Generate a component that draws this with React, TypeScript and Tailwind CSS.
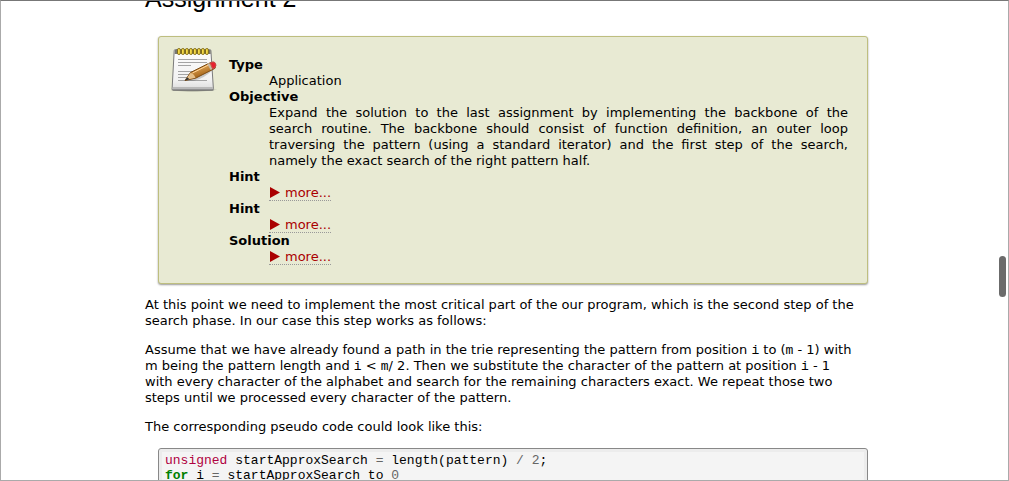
import type { ReactNode } from 'react';

function NotepadIcon() {
  return (
    <svg className="h-12 w-12" viewBox="0 0 48 48" aria-hidden="true">
      <defs>
        <linearGradient id="paper" x1="0" y1="0" x2="0" y2="1">
          <stop offset="0" stopColor="#fdfdfd" />
          <stop offset="0.75" stopColor="#f2f2f2" />
          <stop offset="1" stopColor="#dcdcdc" />
        </linearGradient>
        <linearGradient id="wood" x1="0" y1="0" x2="0.5" y2="1">
          <stop offset="0.25" stopColor="#eeb465" />
          <stop offset="0.8" stopColor="#a8681c" />
        </linearGradient>
        <radialGradient id="shade">
          <stop offset="0.6" stopColor="#000" stopOpacity="0.3" />
          <stop offset="1" stopColor="#000" stopOpacity="0" />
        </radialGradient>
      </defs>
      <ellipse cx="21.500" cy="44.500" rx="25" ry="2.500" fill="url(#shade)" />
      <path d="M4.500 4.500h34q1.300 0 1.400 1.200l2.500 38q0 1.300-1.400 1.300h-38.500q-1.400 0-1.400-1.300l2.100-38q.1-1.200 1.300-1.200z" fill="url(#paper)" stroke="#7b7b7b" />
      <path d="M1.800 42h40l.2 2.500h-40.500z" fill="#b9b9b9" />
      <path d="M1.500 45h41" stroke="#6a6a6a" />
      <path d="M4 5h35.500l.2 4h-36z" fill="#77776f" />
      <path d="M7 14.500h29M7 17.500h29M7 20.500h13M7 26.500h22M7 29.500h19M7 32.500h10M7 35.500h29" stroke="#a4a4a4" />
      {[6, 10, 14, 18, 22, 26, 30, 34].map((x) => (
        <rect key={x} x={x + 0.5} y="3.500" width="2.800" height="6" rx="1.300" fill="#f5da48" stroke="#715c08" strokeWidth="0.8" />
      ))}
      <path d="M15 36q12 1 22-7l6-5-8 0z" fill="#444" opacity="0.25" />
      <path d="M14 35.500l5.500-8 18-9q3.500-1.700 5.500-1.200 3 2.200 1 6L25 33z" fill="url(#wood)" stroke="#7d4b12" strokeLinejoin="round" />
      <path d="M14.500 35l5-7q3.500.5 5 4.800z" fill="#e5c08a" />
      <path d="M14 35.500l2.200-3.200 2.300 1.900z" fill="#333" />
      <path d="M21.500 28l16-8" stroke="#ffd292" />
      <path d="M37.200 18.600l3.300 6" stroke="#c7b9a9" strokeWidth="2" />
      <path d="M39.300 17.800q3.200-1.500 4.500-.3 2.200 2.500.2 5l-2.200 1.500z" fill="#e8212e" stroke="#c84a4a" />
    </svg>
  );
}

function More() {
  return (
    <a href="#more" className="flex h-4 items-center gap-1 border-b border-dotted border-[#999] text-[#aa0000]">
      <svg className="h-3 w-3" viewBox="0 0 12 12" aria-hidden="true">
        <path d="M1 0L11 5.500L1 11z" fill="#aa0000" />
      </svg>
      more...
    </a>
  );
}

function Entry({ term, children }: { term: string; children: ReactNode }) {
  return (
    <>
      <dt className="font-bold">{term}</dt>
      <dd className="flex pl-10">{children}</dd>
    </>
  );
}

function Mono({ children }: { children: ReactNode }) {
  return <code className="font-['Liberation_Mono',monospace] text-[13px] leading-none">{children}</code>;
}

export default function App() {
  return (
    <div className="relative h-screen overflow-hidden border border-[#aaa] border-t-[#777] bg-white font-['DejaVu_Sans',sans-serif] text-[13px] leading-4 text-black">
      <main className="-mt-[19px] mr-32 ml-36">
        <h2 className="font-['Liberation_Sans',sans-serif] text-[25px] leading-8 font-medium">Assignment 2</h2>
        <section className="mt-[22px] mr-3 ml-[13px] flex gap-2.5 rounded-[3px] border border-[#bebe7f] bg-[#e8ead3] px-3 pt-2 pb-[18px] shadow-[0_1px_2px_#999]">
          <div className="shrink-0">
            <NotepadIcon />
          </div>
          <dl className="mr-[7px] flex-1 pt-3">
            <Entry term="Type">Application</Entry>
            <Entry term="Objective">
              <p className="flex-1">
                <span className="block [text-align-last:justify]">Expand the solution to the last assignment by implementing the backbone of the </span>
                <span className="block [text-align-last:justify]">search routine. The backbone should consist of function definition, an outer loop </span>
                <span className="block [text-align-last:justify]">traversing the pattern (using a standard iterator) and the first step of the search, </span>
                <span className="block">namely the exact search of the right pattern half.</span>
              </p>
            </Entry>
            <Entry term="Hint"><More /></Entry>
            <Entry term="Hint"><More /></Entry>
            <Entry term="Solution"><More /></Entry>
          </dl>
        </section>
        <p className="mt-[13px]">
          At this point we need to implement the most critical part of the our program, which is the second step of the<br />
          search phase. In our case this step works as follows:
        </p>
        <p className="mt-[13px]">
          Assume that we have already found a path in the trie representing the pattern from position <Mono>i</Mono> to (<Mono>m</Mono> - 1) with<br />
          m being the pattern length and <Mono>i</Mono> &lt; <Mono>m</Mono>/ 2. Then we substitute the character of the pattern at position <Mono>i</Mono> - 1<br />
          with every character of the alphabet and search for the remaining characters exact. We repeat those two<br />
          steps until we processed every character of the pattern.
        </p>
        <p className="mt-[13px]">The corresponding pseudo code could look like this:</p>
        <pre className="mt-[13px] mr-3 ml-[13px] rounded-[3px] border border-[#888] bg-[#f4f4f4] px-1.5 py-1 font-['Liberation_Mono',monospace] text-[13px] leading-[15px] shadow-[inset_0_0_0_3px_#ececec]">
          <span className="text-[#b00040]">unsigned</span>{' startApproxSearch '}
          <span className="text-[#666]">=</span>{' length(pattern) '}
          <span className="text-[#666]">/ 2</span>{';\n'}
          <span className="font-bold text-[#008000]">for</span>{' i '}
          <span className="text-[#666]">=</span>{' startApproxSearch to '}
          <span className="text-[#666]">0</span>
        </pre>
      </main>
      <div className="absolute top-[255px] right-0.5 h-[41px] w-[7px] rounded-full bg-[#6b6b6b]" />
    </div>
  );
}
